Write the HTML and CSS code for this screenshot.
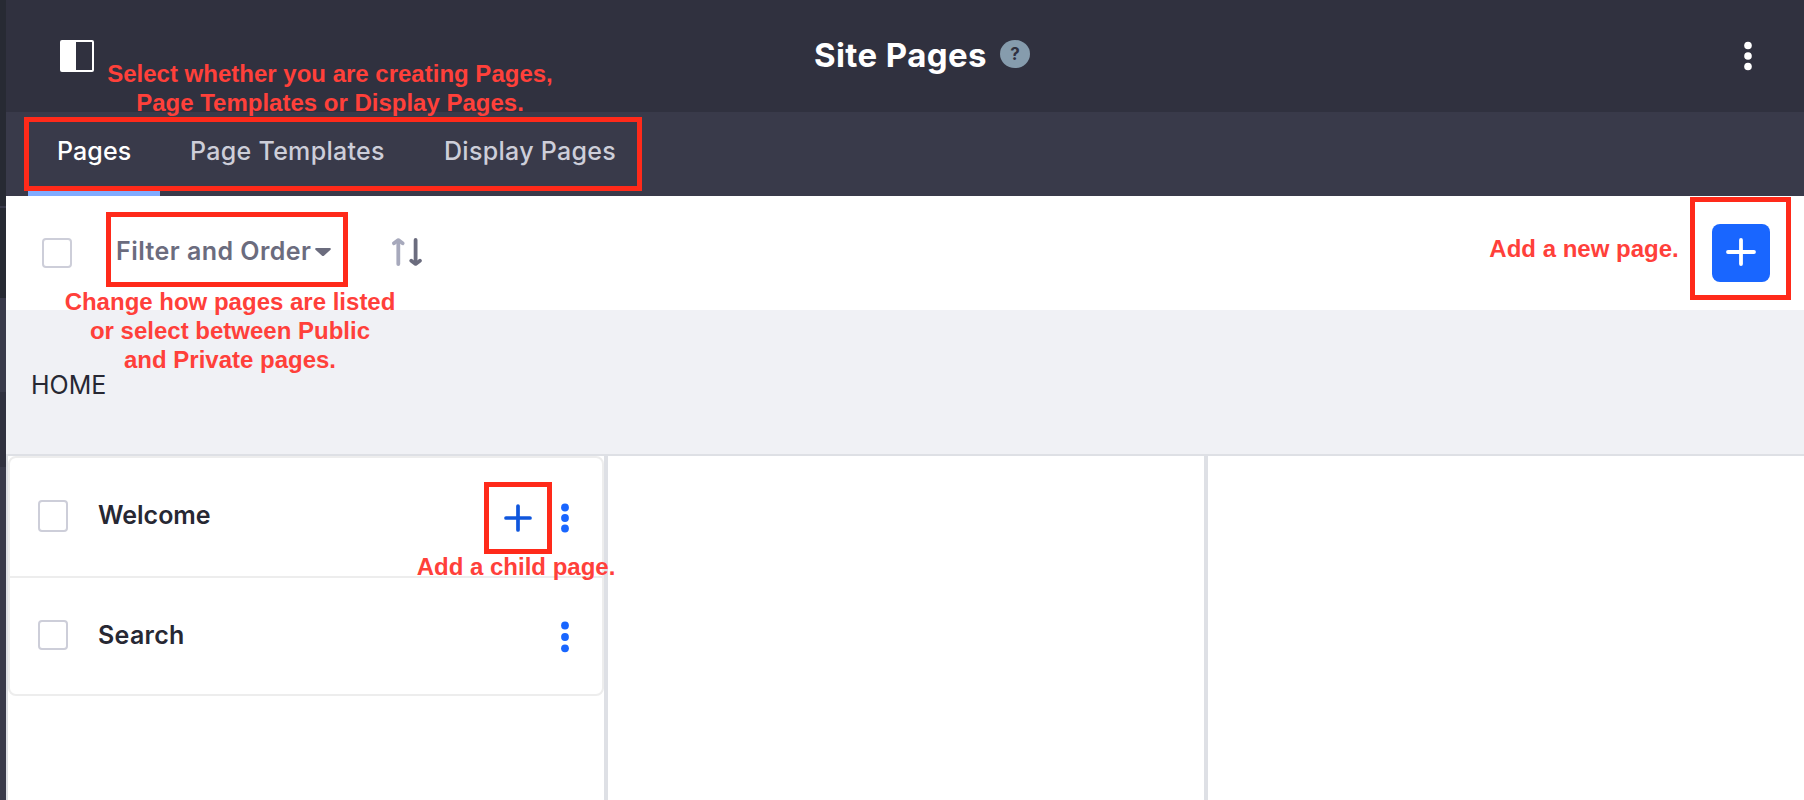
FILE: index.html
```
<!DOCTYPE html>
<html lang="en">
<head>
<meta charset="utf-8">
<title>Site Pages</title>
<link rel="stylesheet" href="styles.css">
</head>
<body>
<div class="app">
  <aside class="rail"></aside>
  <main class="main">
    <header class="header">
      <svg class="panel-icon" width="34" height="32" viewBox="0 0 34 32"><rect x="1" y="1" width="32" height="30" rx="1" fill="none" stroke="#fff" stroke-width="2"/><path fill="#fff" d="M1 1h15v30H1z"/></svg>
      <div class="heading"><h1 class="title">Site Pages</h1><span class="help">?</span></div>
      <svg class="header-dots" width="8" height="30" viewBox="0 0 8 30" fill="#fff"><circle cx="4" cy="4.5" r="3.8"/><circle cx="4" cy="15" r="3.8"/><circle cx="4" cy="25.5" r="3.8"/></svg>
    </header>
    <nav class="tabs">
      <a class="tab tab-active"><span>Pages</span></a>
      <a class="tab tab-templates"><span>Page Templates</span></a>
      <a class="tab tab-display"><span>Display Pages</span></a>
    </nav>
    <section class="toolbar">
      <span class="check"></span>
      <span class="filter">Filter and Order</span>
      <svg class="caret" width="16" height="9" viewBox="0 0 16 9"><path fill="#6b6c7e" d="M1 0h14q1.600.8.500 1.700L9.200 7.600q-1.200 1-2.400 0L.5 1.700Q-.6.8 1 0z"/></svg>
      <svg class="sort" width="31" height="28" viewBox="0 0 31 28" fill="none" stroke-width="3.800" stroke-linecap="round" stroke-linejoin="round"><g stroke="#a7a9bc"><path d="M6.300 3v23"/><path d="M2 5.300l4.300-3.200 4.300 3.200"/></g><g stroke="#6b6c7e"><path d="M23.600 2v23"/><path d="M19.300 22.700l4.300 3.200 4.300-3.200"/></g></svg>
      <button class="add"><svg width="30" height="28" viewBox="0 0 30 28" stroke="#fff" stroke-width="3.800" stroke-linecap="round"><path d="M15 2v24M2 14h26"/></svg></button>
    </section>
    <section class="crumbs">HOME</section>
    <section class="columns">
      <div class="column">
        <ul class="list">
          <li class="row">
            <span class="check check-tall"></span><span class="name">Welcome</span>
            <svg class="plus" width="28" height="28" viewBox="0 0 28 28" stroke="#0f56dd" stroke-width="3.700" stroke-linecap="round"><path d="M14 2v24M2 14h24"/></svg>
            <svg class="dots" width="8" height="30" viewBox="0 0 8 30" fill="#1966ff"><circle cx="4" cy="4.500" r="3.900"/><circle cx="4" cy="15" r="3.900"/><circle cx="4" cy="25.500" r="3.900"/></svg>
          </li>
          <li class="row">
            <span class="check"></span><span class="name name-search">Search</span>
            <svg class="dots" width="8" height="32" viewBox="0 0 8 32" fill="#1966ff"><circle cx="4" cy="4.500" r="3.900"/><circle cx="4" cy="16" r="3.900"/><circle cx="4" cy="27.300" r="3.900"/></svg>
          </li>
        </ul>
      </div>
      <div class="column"></div>
      <div class="column"></div>
    </section>
  </main>

  <div class="box box-tabs"></div>
  <div class="box box-filter"></div>
  <div class="box box-add"></div>
  <div class="box box-child"></div>
  <p class="note note-tabs">Select whether you are creating Pages,<br>Page Templates or Display Pages.</p>
  <p class="note note-filter">Change how pages are listed<br>or select between Public<br>and Private pages.</p>
  <p class="note note-add">Add a new page.</p>
  <p class="note note-child">Add a child page.</p>
</div>
</body>
</html>
```
FILE: styles.css
```
* { box-sizing: border-box; }
body { margin: 0; font-family: Inter, "Liberation Sans", sans-serif; color: #272833; }
.app { position: relative; display: flex; width: 1804px; height: 800px; overflow: hidden; background: #fff; }
.rail {
  width: 6px; flex: none;
  background: linear-gradient(#272a33 206px, #393a4a 206px 208px, #272a33 208px 298px, #393a4a 298px 392px, #30313f 392px 467px, #393a4a 467px);
}
.main { flex: 1; display: flex; flex-direction: column; min-width: 0; }
.header { height: 112px; flex: none; background: #30313f; display: flex; align-items: center; padding: 0 52px 0 54px; }
.panel-icon { display: block; }
.heading { display: flex; align-items: center; margin-left: 720px; }
.title { width: 186px; margin: -2px 0 0; font-size: 33px; line-height: 40px; font-weight: 650; letter-spacing: 0.4px; color: #fff; white-space: nowrap; }
.help { width: 30px; height: 28px; border-radius: 50%; background: #869cad; color: #30313f; font-size: 17px; line-height: 28px; font-weight: 700; text-align: center; margin-top: -4px; }
.header-dots { margin-left: auto; }
.tabs { height: 84px; flex: none; background: #393a4a; display: flex; padding-left: 22px; }
.tab { height: 84px; padding: 23px 0 0 30px; font-size: 25px; line-height: 32px; font-weight: 500; letter-spacing: 0.3px; color: #cdced9; white-space: nowrap; }
.tab-active { width: 132px; color: #fff; border-bottom: 6px solid #80acff; padding-left: 29px; letter-spacing: 0.1px; }
.tab-templates { width: 254px; }
.toolbar { height: 114px; flex: none; background: #fff; display: flex; align-items: flex-start; padding: 0 34px 0 36px; }
.check { width: 30px; height: 30px; flex: none; border: 2px solid #cdced9; border-radius: 4px; background: #fff; }
.check-tall { height: 32px; }
.toolbar .check { margin-top: 42px; }
.filter { width: 194px; margin: 39px 5px 0 44px; font-size: 25px; line-height: 32px; font-weight: 570; letter-spacing: 0.45px; color: #6b6c7e; white-space: nowrap; }
.caret { margin-top: 52px; }
.sort { margin: 42px 0 0 61px; }
.add { width: 58px; height: 58px; margin: 28px 0 0 auto; padding: 0 0 2px; border: 0; border-radius: 8px; background: #1966ff; display: flex; align-items: center; justify-content: center; }
.crumbs { height: 146px; flex: none; background: #f0f1f5; border-bottom: 2px solid #dee0e5; padding: 59px 0 0 25px; font-size: 25px; line-height: 32px; }
.columns { flex: 1; display: grid; grid-template-columns: 600px 600px 1fr; border-left: 2px solid #dee0e5; }
.column { border-right: 4px solid #dee0e5; }
.column:last-child { border-right: 0; }
.list { list-style: none; margin: 0; padding: 0; width: 596px; height: 240px; border: 2px solid #ededed; border-radius: 8px; }
.row { height: 120px; display: flex; align-items: flex-start; padding: 42px 33px 0 28px; }
.row:first-child { border-bottom: 2px solid #ededed; }
.row:last-child { height: 118px; }
.name { margin: -1px 0 0 30px; font-size: 25px; line-height: 32px; font-weight: 600; flex: 1; white-space: nowrap; }
.name-search { letter-spacing: 0.3px; }
.plus { margin: 4px 29px 0 0; }
.dots { margin-top: 3px; }
.row:last-child .dots { margin-top: 1px; }

/* Callouts laid over the interface */
.box { position: absolute; border: 5px solid #ff2a1a; }
.box-tabs { left: 24px; top: 117px; width: 618px; height: 74px; }
.box-filter { left: 106px; top: 212px; width: 242px; height: 75px; }
.box-add { left: 1690px; top: 197px; width: 101px; height: 103px; }
.box-child { left: 484px; top: 482px; width: 68px; height: 72px; }
.note { position: absolute; margin: 0; font: bold 24px/29px "Liberation Sans", Arial, sans-serif; color: #ff403a; text-align: center; white-space: nowrap; }
.note-tabs { left: 106px; top: 59px; width: 448px; }
.note-filter { left: 61px; top: 287px; width: 338px; }
.note-add { left: 1488px; top: 234px; width: 192px; }
.note-child { left: 416px; top: 552px; width: 200px; }
```
